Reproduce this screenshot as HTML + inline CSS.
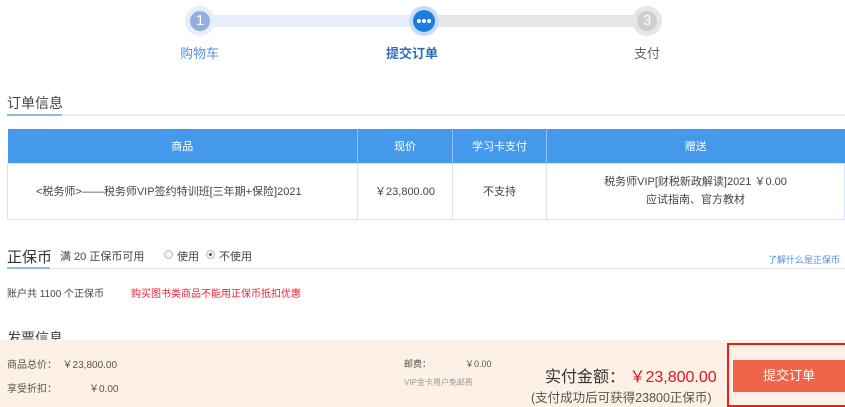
<!DOCTYPE html>
<html><head><meta charset="utf-8"><style>
*{margin:0;padding:0;box-sizing:border-box}
body{width:845px;height:407px;overflow:hidden;background:#fff;font-family:"Liberation Sans","Noto Sans CJK SC",sans-serif;color:#333;position:relative}
.a{position:absolute;white-space:nowrap}
.c{border-radius:50%;position:absolute}
table{border-collapse:collapse;position:absolute;left:7px;top:129px;width:838px;font-size:11px}
th{background:#4499ea;color:#fff;font-weight:normal;height:34px;border-right:1px solid #8cc0f2}
td{height:56px;border:1px solid #d6e4f3;text-align:center;color:#444}
</style></head><body>
<div class="a" style="left:200px;top:15px;width:224px;height:12px;background:#e6eefc"></div>
<div class="a" style="left:424px;top:15px;width:223px;height:12px;background:#e6e6e6"></div>
<div class="c" style="left:185px;top:6px;width:30px;height:30px;background:#e6eefc"></div>
<div class="c" style="left:190px;top:11px;width:20px;height:20px;background:#94aee0;color:#fff;font-size:15px;text-align:center;line-height:20px">1</div>
<div class="c" style="left:409px;top:6px;width:30px;height:30px;background:#c7dcf9"></div>
<div class="c" style="left:413px;top:10px;width:22px;height:22px;background:#1e7ee0"></div>
<div class="c" style="left:417px;top:19px;width:4px;height:4px;background:#fff"></div>
<div class="c" style="left:422px;top:19px;width:4px;height:4px;background:#fff"></div>
<div class="c" style="left:427px;top:19px;width:4px;height:4px;background:#fff"></div>
<div class="c" style="left:632px;top:6px;width:30px;height:30px;background:#e6e6e6"></div>
<div class="c" style="left:637px;top:11px;width:20px;height:20px;background:#cfcfcf;color:#fff;font-size:15px;text-align:center;line-height:20px">3</div>
<div class="a" style="left:180px;top:43px;font-size:13px;color:#5b8fd8">购物车</div>
<div class="a" style="left:386px;top:43px;font-size:13px;color:#2b6cc4;font-weight:bold">提交订单</div>
<div class="a" style="left:634px;top:43px;font-size:13px;color:#666">支付</div>

<div class="a" style="left:7px;top:93px;font-size:14px;color:#444">订单信息</div>
<div class="a" style="left:7px;top:114px;width:838px;height:2px;background:#efefef"></div>
<div class="a" style="left:7px;top:114px;width:55px;height:2px;background:#8bbcec"></div>

<table><tr><th style="width:350px">商品</th><th style="width:95px">现价</th><th style="width:94px">学习卡支付</th><th style="border-right:none">赠送</th></tr>
<tr><td style="text-align:left;padding-left:28px">&lt;税务师&gt;——税务师VIP签约特训班[三年期+保险]2021</td><td>￥23,800.00</td><td>不支持</td><td style="line-height:18px">税务师VIP[财税新政解读]2021 ￥0.00<br>应试指南、官方教材</td></tr></table>

<div class="a" style="left:7px;top:246px;font-size:15px;color:#333">正保币</div>
<div class="a" style="left:60px;top:248px;font-size:11px;color:#444">满 20 正保币可用</div>
<div class="c" style="left:164px;top:250px;width:9px;height:9px;border:1px solid #bbb;background:#f4f4f4"></div>
<div class="a" style="left:177px;top:248px;font-size:11px;color:#444">使用</div>
<div class="c" style="left:206px;top:250px;width:9px;height:9px;border:1px solid #bbb;background:#f4f4f4"></div>
<div class="c" style="left:209px;top:253px;width:3px;height:3px;background:#555"></div>
<div class="a" style="left:219px;top:248px;font-size:11px;color:#444">不使用</div>
<div class="a" style="left:768px;top:253px;font-size:9px;color:#4d8fdc">了解什么是正保币</div>
<div class="a" style="left:7px;top:268px;width:838px;height:1px;background:#e6e6e6"></div>
<div class="a" style="left:7px;top:267px;width:43px;height:2px;background:#8bbcec"></div>
<div class="a" style="left:7px;top:285px;font-size:10px;color:#444">账户共 1100 个正保币</div>
<div class="a" style="left:131px;top:285px;font-size:10px;color:#f0203a">购买图书类商品不能用正保币抵扣优惠</div>
<div class="a" style="left:7px;top:328px;font-size:14px;color:#444">发票信息</div>

<div class="a" style="left:0;top:340px;width:845px;height:67px;background:#fdf0e4"></div>
<div class="a" style="left:7px;top:356px;font-size:10px;color:#555">商品总价：&nbsp;&nbsp;￥23,800.00</div>
<div class="a" style="left:7px;top:380px;font-size:10px;color:#555">享受折扣：</div>
<div class="a" style="left:89px;top:380px;font-size:10px;color:#555">￥0.00</div>
<div class="a" style="left:404px;top:357px;font-size:9px;color:#555">邮费：</div>
<div class="a" style="left:465px;top:357px;font-size:9px;color:#555">￥0.00</div>
<div class="a" style="left:404px;top:377px;font-size:8px;color:#999">VIP金卡用户免邮费</div>
<div class="a" style="left:545px;top:363px;font-size:16px;color:#333">实付金额： <span style="color:#e8101e">￥23,800.00</span></div>
<div class="a" style="left:531px;top:387px;font-size:12.5px;color:#555">(支付成功后可获得23800正保币)</div>
<div class="a" style="left:727px;top:343px;width:118px;height:64px;border:2px solid #f01c1c;border-right:none"></div>
<div class="a" style="left:733px;top:360px;width:112px;height:32px;background:#f0654a;color:#fff;font-size:13px;text-align:center;line-height:32px">提交订单</div>
</body></html>
